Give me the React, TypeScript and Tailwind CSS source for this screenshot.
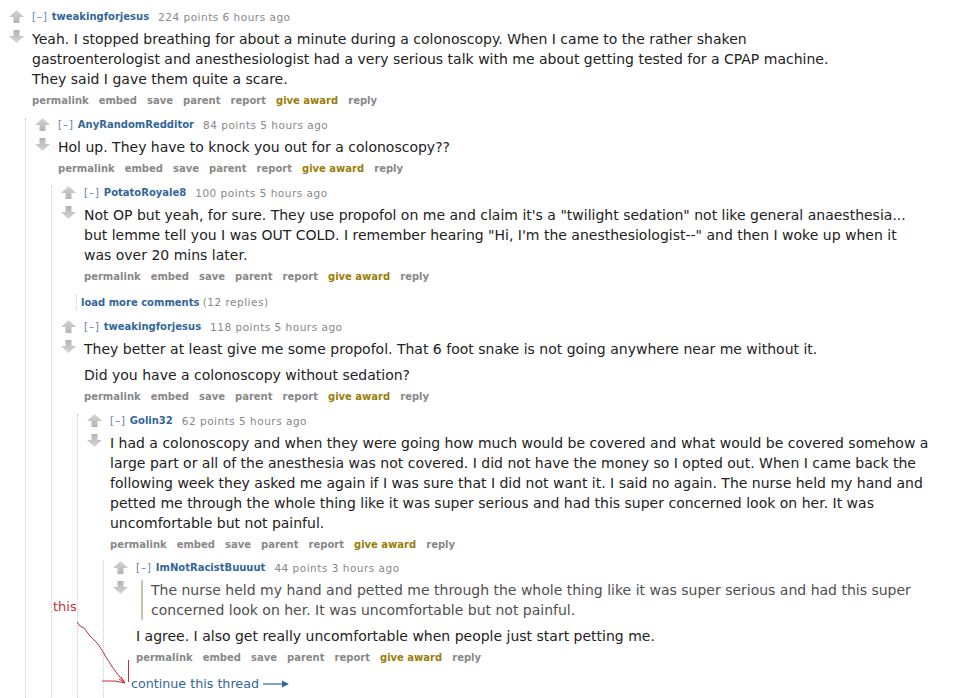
import type { ReactNode } from 'react';

interface CommentProps {
  author: string;
  points: string;
  time: string;
  body: ReactNode;
  children?: ReactNode;
}

const FONT = { fontFamily: '"DejaVu Sans", Verdana, sans-serif' };

function VoteArrow({ down = false }: { down?: boolean }) {
  const id = down ? 'gdown' : 'gup';
  return (
    <svg width="15" height="14" viewBox="0 0 15 14" className={down ? 'rotate-180' : ''}>
      <defs>
        <linearGradient id={id} x1="0" y1="0" x2="0" y2="1">
          <stop offset="0" stopColor="#d6d6d6" />
          <stop offset="1" stopColor="#b2b2b2" />
        </linearGradient>
      </defs>
      <polygon points="7.5,0 15,7 10.5,7 10.5,13 4.5,13 4.5,7 0,7" fill={`url(#${id})`} />
    </svg>
  );
}

function Buttons() {
  const items = ['permalink', 'embed', 'save', 'parent', 'report'];
  return (
    <div className="mt-[5px] flex h-[14px] items-center gap-[10px] text-[10px] leading-[14px] font-bold text-[#888]">
      {items.map((item) => (
        <span key={item}>{item}</span>
      ))}
      <span className="text-[#9a7d0a]">give award</span>
      <span>reply</span>
    </div>
  );
}

function Comment({ author, points, time, body, children }: CommentProps) {
  return (
    <div>
      <div className="flex">
        {/* vote arrows */}
        <div className="flex w-[15px] shrink-0 flex-col">
          <VoteArrow />
          <div className="mt-[5px]">
            <VoteArrow down />
          </div>
        </div>

        <div className="ml-[8px] min-w-0 flex-1">
          {/* tagline */}
          <div className="flex h-[14px] items-center text-[10px] leading-[14px]">
            <span className="tracking-[1px] text-[#5b7fa8]">[–]</span>
            <span className="ml-[4px] font-bold text-[#369]">{author}</span>
            <span className="ml-[9px] text-[10.5px] tracking-[0.5px] text-[#888]">
              {points} points {time}
            </span>
          </div>
          <div className="mt-[5px] text-[14px] leading-[20px] text-[#222]">{body}</div>
          <Buttons />
        </div>
      </div>

      {children}
    </div>
  );
}

function Child({ children, last = false }: { children: ReactNode; last?: boolean }) {
  return (
    <div
      className={`ml-[16px] border-l border-dotted border-[#ccd] pl-[9px] ${last ? 'mt-[9px] pb-[20px]' : 'mt-[10px]'}`}
    >
      {children}
    </div>
  );
}

export default function App() {
  return (
    <div className="relative h-[698px] w-[969px] overflow-hidden bg-white pl-[9px] pr-[10px] pt-[10px]" style={FONT}>
      <Comment
        author="tweakingforjesus"
        points="224"
        time="6 hours ago"
        body={
          <p>
            Yeah. I stopped breathing for about a minute during a colonoscopy. When I came to the rather shaken
            <br />
            gastroenterologist and anesthesiologist had a very serious talk with me about getting tested for a CPAP machine.
            <br />
            They said I gave them quite a scare.
          </p>
        }
      >
        <Child>
          <Comment
            author="AnyRandomRedditor"
            points="84"
            time="5 hours ago"
            body={<p>Hol up. They have to knock you out for a colonoscopy??</p>}
          >
            <Child>
              <Comment
                author="PotatoRoyale8"
                points="100"
                time="5 hours ago"
                body={
                  <p>
                    Not OP but yeah, for sure. They use propofol on me and claim it's a "twilight sedation" not like general anaesthesia...
                    <br />
                    but lemme tell you I was OUT COLD. I remember hearing "Hi, I'm the anesthesiologist--" and then I woke up when it
                    <br />
                    was over 20 mins later.
                  </p>
                }
              />

              {/* load more */}
              <div className="ml-[15px] mt-[11px] border-l border-dotted border-[#ccd] pl-[4px] text-[10px] leading-[14px]">
                <span className="font-bold text-[#369]">load more comments</span>{' '}
                <span className="text-[10.5px] tracking-[0.5px] text-[#888]">(12 replies)</span>
              </div>

              <div className="mt-[10px]">
                <Comment
                  author="tweakingforjesus"
                  points="118"
                  time="5 hours ago"
                  body={
                    <div className="space-y-[6px]">
                      <p>They better at least give me some propofol. That 6 foot snake is not going anywhere near me without it.</p>
                      <p>Did you have a colonoscopy without sedation?</p>
                    </div>
                  }
                >
                  <Child>
                    <Comment
                      author="Golin32"
                      points="62"
                      time="5 hours ago"
                      body={
                        <p>
                          I had a colonoscopy and when they were going how much would be covered and what would be covered somehow a
                          <br />
                          large part or all of the anesthesia was not covered. I did not have the money so I opted out. When I came back the
                          <br />
                          following week they asked me again if I was sure that I did not want it. I said no again. The nurse held my hand and
                          <br />
                          petted me through the whole thing like it was super serious and had this super concerned look on her. It was
                          <br />
                          uncomfortable but not painful.
                        </p>
                      }
                    >
                      <Child last>
                        <Comment
                          author="ImNotRacistBuuuut"
                          points="44"
                          time="3 hours ago"
                          body={
                            <div className="space-y-[6px]">
                              <blockquote className="ml-[5px] border-l-2 border-[#c5c1ad] pl-[8px] text-[#4f4f4f]">
                                The nurse held my hand and petted me through the whole thing like it was super serious and had this super
                                <br />
                                concerned look on her. It was uncomfortable but not painful.
                              </blockquote>
                              <p>I agree. I also get really uncomfortable when people just start petting me.</p>
                            </div>
                          }
                        >
                          <div className="ml-[18px] mt-[11px] flex items-center text-[12.7px] leading-[16px] text-[#369]">
                            <span>continue this thread</span>
                            <svg width="26" height="8" viewBox="0 0 26 8" className="ml-[4px]">
                              <line x1="0" y1="4" x2="21" y2="4" stroke="#369" strokeWidth="1.2" />
                              <polygon points="19,0.5 26,4 19,7.5" fill="#369" />
                            </svg>
                          </div>
                        </Comment>
                      </Child>
                    </Comment>
                  </Child>
                </Comment>
              </div>
            </Child>
          </Comment>
        </Child>
      </Comment>

      {/* red hand-drawn annotation */}
      <span className="absolute left-[53px] top-[599px] text-[13px] leading-[16px] text-[#c8323c]">this</span>
      <svg className="pointer-events-none absolute left-0 top-0" width="969" height="698">
        <path
          d="M77 622 L80 626 L84 628 L90 636 L97 643 L100 647 L106 657 L113 668 L119 676 L125 683"
          fill="none"
          stroke="#c0303a"
          strokeWidth="1"
        />
        <path d="M102 681 L115 681 L125 683" fill="none" stroke="#c0303a" strokeWidth="1" />
        <path d="M119 679 L125 683 L121 677" fill="none" stroke="#c0303a" strokeWidth="1" />
        <line x1="128.5" y1="660" x2="128.5" y2="682" stroke="#c0303a" strokeWidth="1" />
      </svg>
    </div>
  );
}
